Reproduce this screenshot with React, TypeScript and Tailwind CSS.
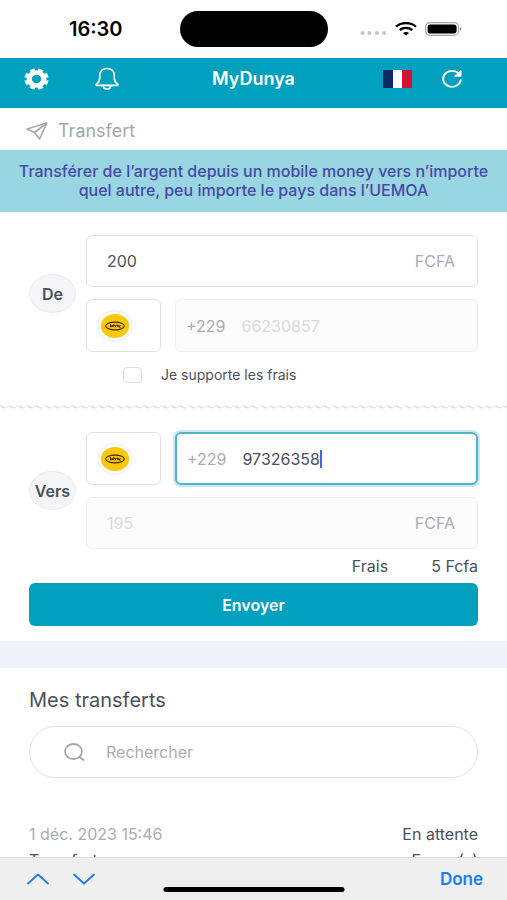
import { useState } from 'react';
import type { ReactNode } from 'react';

const transfers = [
    { date: '1 déc. 2023 15:46', status: 'En attente', label: 'Transfert', detail: 'Erreur(s)' },
];

// ── Icons ──────────────────────────────────────────────────────────────────────

function GearIcon() {
    return (
        <svg viewBox="0 0 24 24" preserveAspectRatio="none" className="w-[25px] h-[22px]" fill="none" stroke="currentColor">
            <circle cx="12" cy="12" r="7" strokeWidth="5" />
            {/* eight teeth, one dash each */}
            <circle cx="12" cy="12" r="10" strokeWidth="3.400" pathLength="80" strokeDasharray="6 4" strokeDashoffset="-2" />
        </svg>
    );
}

function BellIcon() {
    return (
        <svg viewBox="0 0 26 24" className="w-[26px] h-6" fill="none" stroke="currentColor" strokeWidth="1.7" strokeLinejoin="round" strokeLinecap="round">
            <path d="M13 1.500c-4.600 0-7.300 3-7.300 6.800v3.500c0 2.700-1 3.600-3.300 5.400-.6.500-.4 1.200.4 1.200h20.400c.8 0 1-.7.4-1.200-2.300-1.800-3.300-2.700-3.300-5.400V8.300c0-3.800-2.700-6.800-7.300-6.800z" />
            <path d="M9.300 18.600c.2 2.200 1.700 3.600 3.700 3.600s3.500-1.400 3.700-3.600" />
        </svg>
    );
}

function RefreshIcon() {
    return (
        <svg viewBox="0 0 22 20" className="w-[22px] h-5" fill="none" stroke="currentColor" strokeWidth="1.8" strokeLinecap="round">
            <path d="M18.200 5.200A8.900 7.900 0 1 0 19.800 11" />
            <path d="M20 1.800v5.400h-6.200z" fill="currentColor" strokeWidth="1" strokeLinejoin="round" />
        </svg>
    );
}

function SendIcon() {
    return (
        <svg viewBox="0 0 22 18" className="w-[22px] h-[18px]" fill="none" stroke="currentColor" strokeWidth="1.600" strokeLinejoin="round">
            <path d="M20.800 1 1 7l7.400 3.500 5.200 6.500z" />
            <path d="M8.400 10.500 20.800 1" />
        </svg>
    );
}

function SearchIcon() {
    return (
        <svg viewBox="0 0 22 18" className="w-[22px] h-[18px]" fill="none" stroke="currentColor" strokeWidth="1.8" strokeLinecap="round">
            <ellipse cx="9.500" cy="8.500" rx="8.500" ry="7.500" />
            <path d="M15.500 14l4 3" />
        </svg>
    );
}

function FlagIcon() {
    return (
        <svg viewBox="0 0 29 18" className="w-[29px] h-[18px]">
            <path fill="#0b2a62" d="M0 0h10v18H0z" />
            <path fill="#fff" d="M10 0h9v18h-9z" />
            <path fill="#d31235" d="M19 0h10v18H19z" />
        </svg>
    );
}

function MtnLogo() {
    return (
        <svg viewBox="0 0 36 32" className="w-9 h-8">
            <ellipse cx="18" cy="16" rx="17.200" ry="15.200" fill="#fff" stroke="#e6e8ee" />
            <ellipse cx="18" cy="16" rx="14.200" ry="12" fill="#fdc70c" />
            <ellipse cx="18" cy="16" rx="9.300" ry="3.900" fill="none" stroke="#3a2f0b" strokeWidth="1.100" />
            <path fill="none" stroke="#3a2f0b" strokeWidth="1.100" d="M13.500 17.300v-2.200l1.400 1.300 1.400-1.300v2.200M17 15.300h2.800M18.400 15.300v2M20.600 17.300v-2l2.300 1.800v-2" />
        </svg>
    );
}

function WifiIcon() {
    return (
        <svg viewBox="0 0 22 14" className="w-[22px] h-[14px]" fill="none" stroke="#000" strokeWidth="2.400">
            <path d="M1 4.600C6.500-.1 15.500-.1 21 4.600" />
            <path d="M4.800 8c3.500-2.900 8.900-2.900 12.400 0" />
            <path d="M11 13.500 7.900 11c1.700-1.400 4.500-1.400 6.200 0z" fill="#000" stroke="none" />
        </svg>
    );
}

function BatteryIcon() {
    return (
        <svg viewBox="0 0 38 14" className="w-[38px] h-[14px]">
            <rect x=".6" y=".6" width="33" height="12.800" rx="4.500" fill="none" stroke="#a3a3a3" strokeWidth="1.200" />
            <rect x="2.600" y="2.400" width="29" height="9.200" rx="2.800" />
            <path d="M35 5v4c1.700-.6 1.700-3.400 0-4z" fill="#8a8a8a" />
        </svg>
    );
}

// ── Form parts ─────────────────────────────────────────────────────────────────

function Side({ title, children }: { title: string; children: ReactNode }) {
    return (
        <div className="flex items-center gap-2.5">
            <h2 className="flex items-center justify-center w-[47px] h-[39px] shrink-0 rounded-[50%] border border-[#e9ebef] bg-[#f3f5f8] text-base font-semibold text-[#4b5059]">
                {title}
            </h2>
            <div className="flex flex-col flex-1 min-w-0 gap-3">{children}</div>
        </div>
    );
}

function OperatorButton() {
    return (
        <button type="button" aria-label="MTN" className="flex items-center w-[75px] h-[53px] shrink-0 pl-2.5 rounded-md border border-[#dfe1e5] bg-white">
            <MtnLogo />
        </button>
    );
}

export default function App() {
    const [amount, setAmount] = useState('200');
    const [phone, setPhone] = useState('97326358');

    return (
        <div className="flex flex-col h-screen overflow-hidden bg-white font-['Inter',sans-serif] text-[#4b5059]">
            {/* Status bar */}
            <div className="grid grid-cols-[1fr_148px_1fr] items-center h-[58px] shrink-0 text-black">
                <span className="pl-3 text-center text-xl font-semibold">16:30</span>
                <span className="h-9 rounded-full bg-black" />
                <div className="flex items-center justify-end gap-2 pr-11">
                    <svg viewBox="0 0 27 4" className="w-[27px] h-1 mt-2" fill="#c4c4c4">
                        <circle cx="2.500" cy="2" r="2" />
                        <circle cx="9.500" cy="2" r="2" />
                        <circle cx="17" cy="2" r="2" />
                        <circle cx="24" cy="2" r="2" />
                    </svg>
                    <WifiIcon />
                    <BatteryIcon />
                </div>
            </div>

            {/* App header */}
            <header className="grid grid-cols-[1fr_auto_1fr] items-center h-[50px] shrink-0 px-6 pb-2 bg-[#01a0be] text-white">
                <div className="flex items-center gap-[45px]">
                    <button type="button" aria-label="Paramètres"><GearIcon /></button>
                    <button type="button" aria-label="Notifications"><BellIcon /></button>
                </div>
                <h1 className="text-lg font-semibold">MyDunya</h1>
                <div className="flex items-center justify-end gap-[29px] pr-5">
                    <button type="button" aria-label="Français"><FlagIcon /></button>
                    <button type="button" aria-label="Actualiser"><RefreshIcon /></button>
                </div>
            </header>

            <main className="flex-1 min-h-0 overflow-hidden">
                <div className="flex items-center gap-2.5 h-[42px] pt-1 px-[26px] text-[#a3a7ae]">
                    <SendIcon />
                    <span className="text-lg">Transfert</span>
                </div>
                <p className="px-4 py-3 bg-[#9ad5e2] text-center text-base leading-[19px] font-medium text-[#454aa5]">
                    Transférer de l’argent depuis un mobile money vers n’importe quel autre, peu importe le pays dans l’UEMOA
                </p>

                <form className="pt-[23px] pb-[15px] text-base" onSubmit={e => e.preventDefault()}>
                    <div className="px-[29px]">
                        <Side title="De">
                            <label className="flex items-center h-[52px] px-5 rounded-md border border-[#dfe1e5]">
                                <input
                                    aria-label="Montant envoyé"
                                    value={amount}
                                    onChange={e => setAmount(e.target.value)}
                                    className="flex-1 min-w-0 outline-none"
                                />
                                <span className="pr-0.5 text-[#a9acb3]">FCFA</span>
                            </label>
                            <div className="flex gap-3.5">
                                <OperatorButton />
                                <label className="flex items-center gap-4 flex-1 min-w-0 px-2.5 rounded-md border border-[#efeff2] bg-[#fcfcfc]">
                                    <span className="text-[#a9acb3]">+229</span>
                                    <input
                                        aria-label="Numéro de départ"
                                        disabled
                                        value="66230857"
                                        className="flex-1 min-w-0 text-[#d8dadd]"
                                    />
                                </label>
                            </div>
                        </Side>
                        <label className="flex items-center gap-[19px] pt-[13px] pl-[94px] text-sm leading-5">
                            <input type="checkbox" className="appearance-none w-[19px] h-4 rounded border border-[#dcdee2] checked:bg-[#01a0be]" />
                            Je supporte les frais
                        </label>
                    </div>

                    {/* Wavy separator */}
                    <svg aria-hidden="true" className="block w-full h-1 mt-5 mb-[23px]">
                        <defs>
                            <pattern id="wave" width="9" height="4" patternUnits="userSpaceOnUse">
                                <path d="M5 3.200 9 .8" fill="none" stroke="#ececec" strokeWidth="1.300" />
                                <path d="M.5 1 5 3.200" fill="none" stroke="#dcdcdc" strokeWidth="1.500" />
                            </pattern>
                        </defs>
                        <rect width="100%" height="4" fill="url(#wave)" />
                    </svg>

                    <div className="px-[29px]">
                        <Side title="Vers">
                            <div className="flex gap-3.5">
                                <OperatorButton />
                                <label className="flex items-center flex-1 min-w-0 px-2.5 rounded-md border-2 border-[#4fb3c6] ring-2 ring-[#c5eaf1]">
                                    <span className="pr-4 text-[#a9acb3]">+229</span>
                                    <input
                                        aria-label="Numéro du destinataire"
                                        value={phone}
                                        onChange={e => setPhone(e.target.value)}
                                        className="field-sizing-content outline-none"
                                    />
                                    <span className="w-0.5 h-[18px] bg-[#4a63e0]" />
                                </label>
                            </div>
                            <label className="flex items-center h-[52px] px-5 rounded-md border border-[#efeff2] bg-[#fcfcfc]">
                                <input aria-label="Montant reçu" disabled value="195" className="flex-1 min-w-0 text-[#d8dadd]" />
                                <span className="pr-0.5 text-[#a9acb3]">FCFA</span>
                            </label>
                        </Side>
                        <div className="flex justify-end gap-[43px] py-[7px] leading-5">
                            <span>Frais</span>
                            <span>5 Fcfa</span>
                        </div>
                        <button type="submit" className="block w-full h-[43px] rounded-md bg-[#01a0be] text-base font-semibold text-white">
                            Envoyer
                        </button>
                    </div>
                </form>

                <div className="h-[27px] bg-[#f0f3f9]" />

                <section className="px-[29px] pt-5">
                    <h2 className="text-xl leading-6">Mes transferts</h2>
                    <label className="flex items-center gap-5 h-[52px] mt-3.5 px-[34px] rounded-full border border-[#dfe1e5] text-[#a3a7ae]">
                        <SearchIcon />
                        <input type="search" aria-label="Rechercher" placeholder="Rechercher" className="flex-1 min-w-0 text-base outline-none placeholder:text-[#a9acb3]" />
                    </label>
                    <ul className="pt-[46px] text-base leading-5">
                        {transfers.map(t => (
                            <li key={t.date} className="grid grid-cols-[1fr_auto] gap-y-1.5">
                                <span className="text-[#a9acb3]">{t.date}</span>
                                <span className="text-right">{t.status}</span>
                                <span>{t.label}</span>
                                <span className="text-right">{t.detail}</span>
                            </li>
                        ))}
                    </ul>
                </section>
            </main>

            {/* Keyboard accessory bar */}
            <footer className="relative flex items-center justify-between h-[43px] shrink-0 pl-[27px] pr-6 border-t border-[#dedede] bg-[#efefef] text-[#1c7df2]">
                <div className="flex gap-6">
                    <button type="button" aria-label="Champ précédent">
                        <svg viewBox="0 0 22 12" className="w-[22px] h-3" fill="none" stroke="currentColor" strokeWidth="1.800" strokeLinecap="round" strokeLinejoin="round">
                            <path d="M1 10.500 11 1.500l10 9" />
                        </svg>
                    </button>
                    <button type="button" aria-label="Champ suivant">
                        <svg viewBox="0 0 22 12" className="w-[22px] h-3" fill="none" stroke="currentColor" strokeWidth="1.800" strokeLinecap="round" strokeLinejoin="round">
                            <path d="M1 1.500l10 9 10-9" />
                        </svg>
                    </button>
                </div>
                <button type="button" className="text-[17px] leading-6 font-semibold">Done</button>
                <span className="absolute bottom-2 left-1/2 w-[181px] h-[5px] -translate-x-1/2 rounded-full bg-black" />
            </footer>
        </div>
    );
}
